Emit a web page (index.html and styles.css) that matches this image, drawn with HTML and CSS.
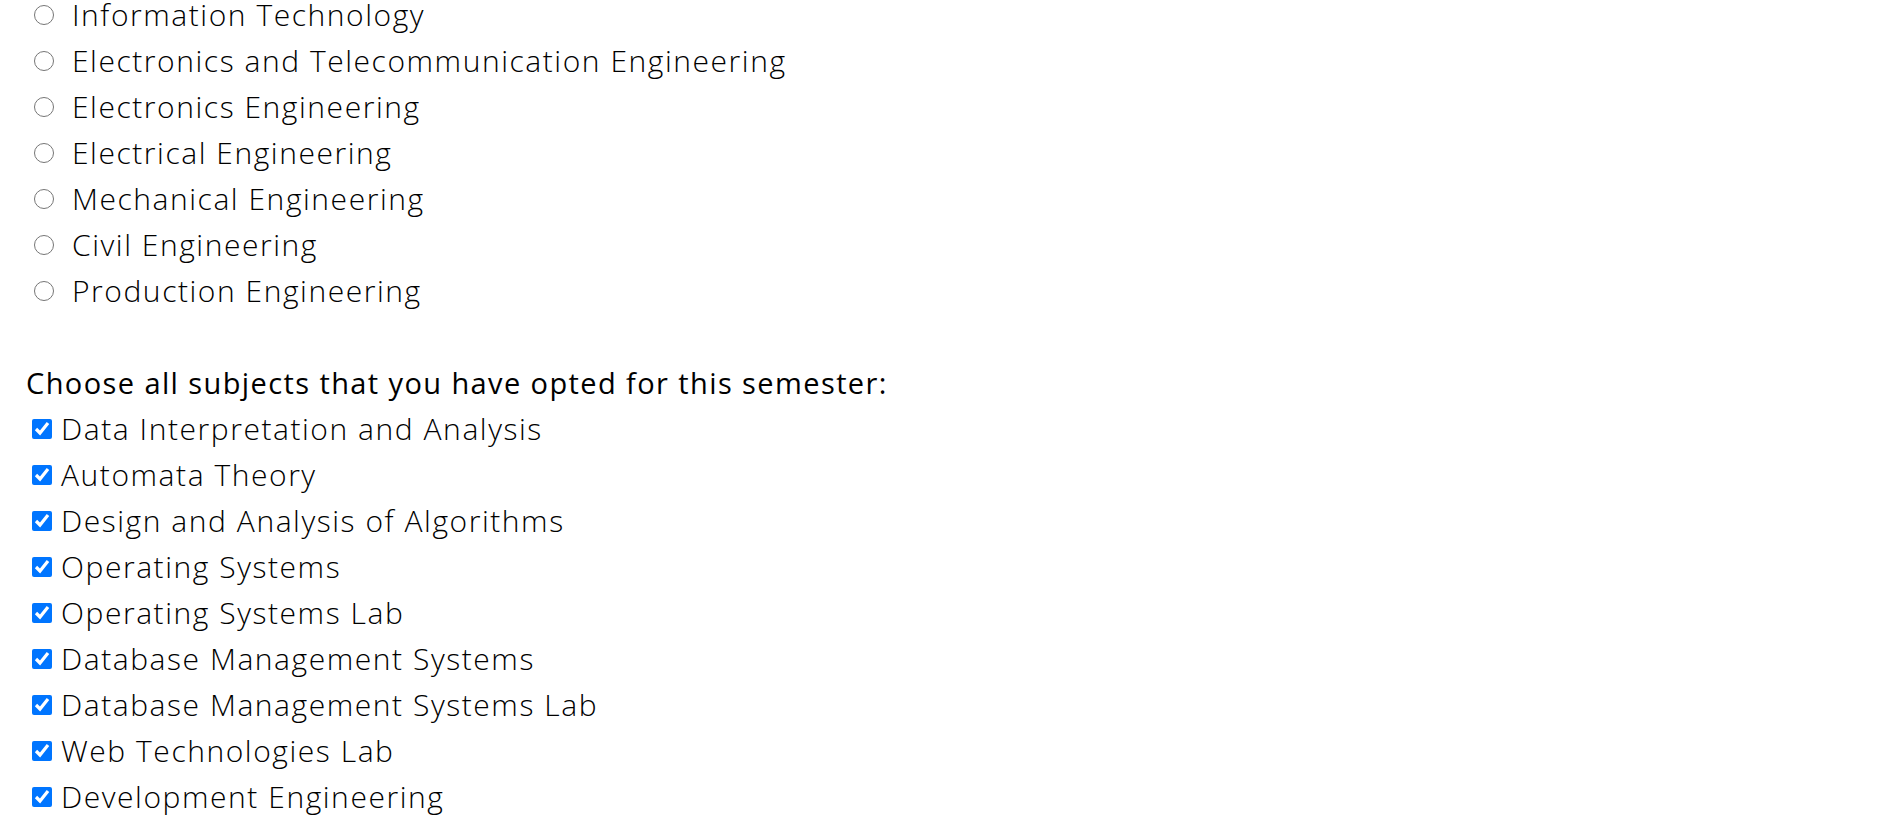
FILE: index.html
```html
<!DOCTYPE html>
<html>
<head>
<meta charset="utf-8">
<link rel="stylesheet" href="styles.css">
</head>
<body>
<form class="form">
  <div class="group">
    <label class="option radio-row"><input type="radio" name="branch"><span>Information Technology</span></label>
    <label class="option radio-row"><input type="radio" name="branch"><span>Electronics and Telecommunication Engineering</span></label>
    <label class="option radio-row"><input type="radio" name="branch"><span>Electronics Engineering</span></label>
    <label class="option radio-row"><input type="radio" name="branch"><span>Electrical Engineering</span></label>
    <label class="option radio-row"><input type="radio" name="branch"><span>Mechanical Engineering</span></label>
    <label class="option radio-row"><input type="radio" name="branch"><span>Civil Engineering</span></label>
    <label class="option radio-row"><input type="radio" name="branch"><span>Production Engineering</span></label>
  </div>
  <div class="spacer"></div>
  <div class="group">
    <p class="question">Choose all subjects that you have opted for this semester:</p>
    <label class="option check-row"><input type="checkbox" checked><span>Data Interpretation and Analysis</span></label>
    <label class="option check-row"><input type="checkbox" checked><span>Automata Theory</span></label>
    <label class="option check-row"><input type="checkbox" checked><span>Design and Analysis of Algorithms</span></label>
    <label class="option check-row"><input type="checkbox" checked><span>Operating Systems</span></label>
    <label class="option check-row"><input type="checkbox" checked><span>Operating Systems Lab</span></label>
    <label class="option check-row"><input type="checkbox" checked><span>Database Management Systems</span></label>
    <label class="option check-row"><input type="checkbox" checked><span>Database Management Systems Lab</span></label>
    <label class="option check-row"><input type="checkbox" checked><span>Web Technologies Lab</span></label>
    <label class="option check-row"><input type="checkbox" checked><span>Development Engineering</span></label>
  </div>
</form>
</body>
</html>
```

FILE: styles.css
```css
html, body {
  margin: 0;
  padding: 0;
  background: #ffffff;
}

body {
  font-family: "Open Sans", "Noto Sans", sans-serif;
  color: #000;
}

.form {
  margin-top: -8px;
  padding-left: 26px;
  display: flex;
  flex-direction: column;
}

.group {
  display: flex;
  flex-direction: column;
}

.spacer {
  height: 46px;
}

.option {
  display: flex;
  align-items: center;
  height: 46px;
  font-size: 30px;
  line-height: 30px;
  font-weight: 300;
  letter-spacing: 1.55px;
}

.option input {
  margin: 0;
  width: 20px;
  height: 20px;
  flex: none;
}

.radio-row input {
  margin-left: 8px;
  margin-right: 18px;
}

.check-row input {
  margin-left: 6px;
  margin-right: 9px;
}

.question {
  margin: 0;
  height: 46px;
  display: flex;
  align-items: center;
  font-size: 29px;
  line-height: 30px;
  font-weight: 400;
  letter-spacing: 1.4px;
}
```
